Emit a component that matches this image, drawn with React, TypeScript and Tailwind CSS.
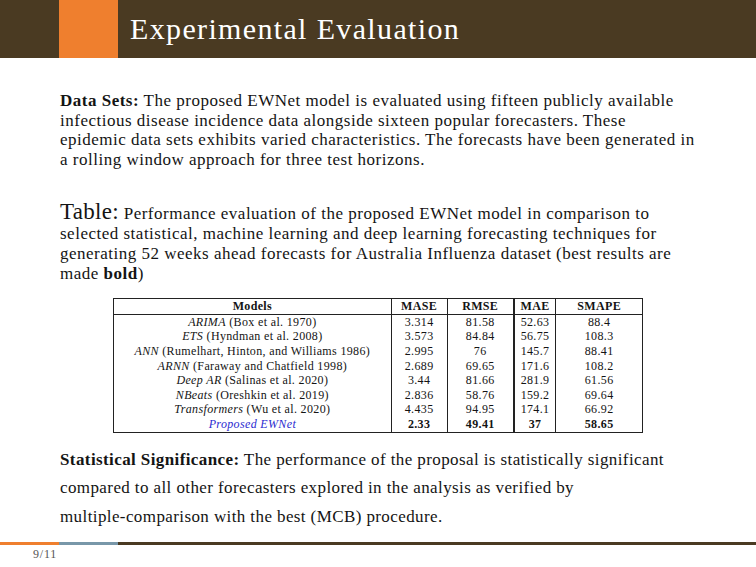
import React from 'react';

const rows = [
  { m: 'ARIMA', c: '(Box et al. 1970)', v: ['3.314', '81.58', '52.63', '88.4'] },
  { m: 'ETS', c: '(Hyndman et al. 2008)', v: ['3.573', '84.84', '56.75', '108.3'] },
  { m: 'ANN', c: '(Rumelhart, Hinton, and Williams 1986)', v: ['2.995', '76', '145.7', '88.41'] },
  { m: 'ARNN', c: '(Faraway and Chatfield 1998)', v: ['2.689', '69.65', '171.6', '108.2'] },
  { m: 'Deep AR', c: '(Salinas et al. 2020)', v: ['3.44', '81.66', '281.9', '61.56'] },
  { m: 'NBeats', c: '(Oreshkin et al. 2019)', v: ['2.836', '58.76', '159.2', '69.64'] },
  { m: 'Transformers', c: '(Wu et al. 2020)', v: ['4.435', '94.95', '174.1', '66.92'] },
];

const App: React.FC = () => {
  return (
    <div className="w-[756px] h-[567px] bg-white flex flex-col font-['Liberation_Serif',serif] text-[#141414]">
      <header className="h-[58px] bg-[#4a3a22] flex items-stretch shrink-0">
        <div className="w-[59px]" />
        <div className="w-[59px] bg-[#ef7f2e]" />
        <h1 className="pl-[12px] pt-[14px] text-white text-[30px] leading-none tracking-[1.35px]">Experimental Evaluation</h1>
      </header>

      <main className="flex-1 pl-[60px] pr-[20px] text-[17px] tracking-[0.45px]">
        <p className="mt-[33px] leading-[19.7px] tracking-[0.5px]">
          <b>Data Sets:</b> The proposed EWNet model is evaluated using fifteen publicly available<br />
          infectious disease incidence data alongside sixteen popular forecasters. These<br />
          epidemic data sets exhibits varied characteristics. The forecasts have been generated in<br />
          a rolling window approach for three test horizons.
        </p>

        <p className="mt-[32px] leading-[20px] tracking-[0.5px]">
          <span className="text-[23px] tracking-[0.3px]">Table:</span> Performance evaluation of the proposed EWNet model in comparison to<br />
          selected statistical, machine learning and deep learning forecasting techniques for<br />
          generating 52 weeks ahead forecasts for Australia Influenza dataset (best results are<br />
          made <b>bold</b>)
        </p>

        <div className="mt-[14px] ml-[53px] w-[530px]">
          <table className="w-full border border-[#222] border-collapse text-[12px] tracking-[0.35px] leading-[14.6px] text-center">
            <colgroup>
              <col className="w-[278px]" />
              <col className="w-[56px]" />
              <col className="w-[67px]" />
              <col className="w-[42px]" />
              <col className="w-[87px]" />
            </colgroup>
            <thead>
              <tr className="border-b border-[#222] font-bold leading-[15px]">
                <th>Models</th>
                <th className="border-l border-[#222]">MASE</th>
                <th className="border-l border-[#222]">RMSE</th>
                <th className="border-l-2 border-[#222]">MAE</th>
                <th className="border-l border-[#222]">SMAPE</th>
              </tr>
            </thead>
            <tbody>
              {rows.map((r) => (
                <tr key={r.m}>
                  <td className="whitespace-nowrap">
                    <i>{r.m}</i> {r.c}
                  </td>
                  <td className="border-l border-[#222]">{r.v[0]}</td>
                  <td className="border-l border-[#222]">{r.v[1]}</td>
                  <td className="border-l-2 border-[#222]">{r.v[2]}</td>
                  <td className="border-l border-[#222]">{r.v[3]}</td>
                </tr>
              ))}
              <tr className="font-bold">
                <td className="font-normal italic text-[#2b2bd0]">Proposed EWNet</td>
                <td className="border-l border-[#222]">2.33</td>
                <td className="border-l border-[#222]">49.41</td>
                <td className="border-l-2 border-[#222]">37</td>
                <td className="border-l border-[#222]">58.65</td>
              </tr>
            </tbody>
          </table>
        </div>

        <p className="mt-[13px] leading-[28.5px] tracking-[0.4px]">
          <b>Statistical Significance:</b> The performance of the proposal is statistically significant<br />
          compared to all other forecasters explored in the analysis as verified by<br />
          multiple-comparison with the best (MCB) procedure.
        </p>
      </main>

      <footer className="shrink-0 h-[25px]">
        <div className="flex h-[3px]">
          <div className="w-[59px] bg-[#ef7f2e]" />
          <div className="w-[59px] bg-[#7897a9]" />
          <div className="flex-1 bg-[#4a3a22]" />
        </div>
        <div className="pl-[33px] pt-[3px] text-[12px] tracking-[0.8px] text-[#555] leading-none">9/11</div>
      </footer>
    </div>
  );
};

export default App;
